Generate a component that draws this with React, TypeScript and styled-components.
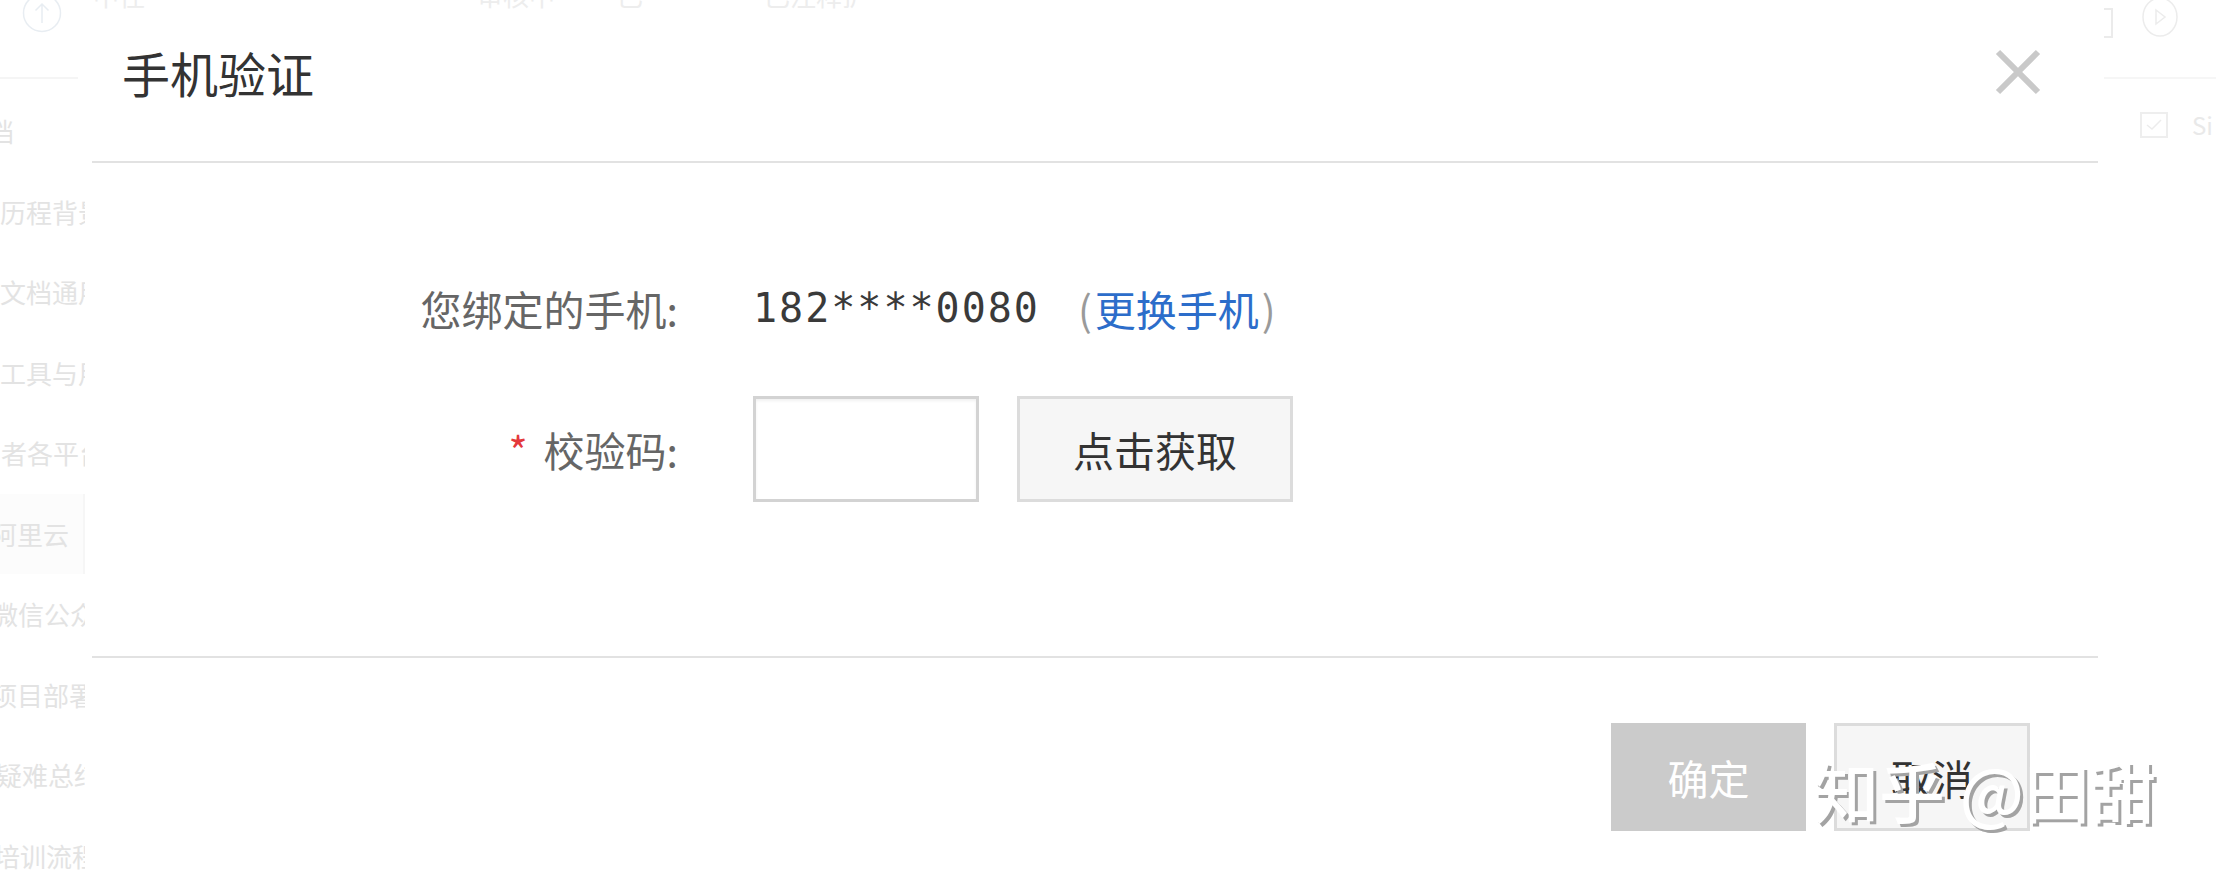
import React from "react";
import styled, { createGlobalStyle } from "styled-components";

const GlobalStyle = createGlobalStyle`
  html, body { margin: 0; padding: 0; background: #fff; }
  body {
    font-family: "Noto Sans CJK SC", "Noto Sans", sans-serif;
    overflow: hidden;
  }
  #root { width: 2216px; height: 882px; overflow: hidden; }
  * { box-sizing: border-box; }
`;

const Page = styled.div`
  position: relative;
  width: 2216px;
  height: 882px;
  overflow: hidden;
  background: #fff;
`;

/* ---------- faded page behind the modal ---------- */
const Backdrop = styled.div`
  display: flex;
  width: 100%;
  height: 100%;
  color: #e4e4e4;
`;

const Sidebar = styled.aside`
  width: 85px;
  flex: none;
  overflow: hidden;
  display: flex;
  flex-direction: column;
`;

const SideTop = styled.div`
  flex: none;
  width: 78px;
  height: 79px;
  border-bottom: 2px solid #f5f5f5;
  padding-left: 22px;
`;

const CircleIcon = styled.svg`
  display: block;
  margin-top: -7px;
`;

const SideList = styled.ul`
  flex: none;
  list-style: none;
  margin: 12px 0 0;
  padding: 0;
`;

const SideItem = styled.li<{ $shift: number; $active?: boolean }>`
  height: 80.5px;
  line-height: 80.5px;
  font-size: 26px;
  white-space: nowrap;
  text-indent: ${(p) => p.$shift}px;
  color: #e3e3e3;
  background: ${(p) => (p.$active ? "#fcfcfc" : "transparent")};
  border-right: 2px solid ${(p) => (p.$active ? "#f6f6f6" : "transparent")};
`;

const MainArea = styled.div`
  flex: 1;
  display: flex;
  flex-direction: column;
`;

const TopRow = styled.div`
  flex: none;
  display: flex;
  height: 10px;
  overflow: hidden;
`;

const TopCell = styled.div<{ $w: number }>`
  width: ${(p) => p.$w}px;
  flex: none;
  font-size: 26px;
  line-height: 28px;
  margin-top: -19px;
  padding-left: 8px;
  color: #ededed;
  white-space: nowrap;
`;

const RightPanel = styled.div`
  width: 116px;
  flex: none;
  display: flex;
  flex-direction: column;
  overflow: hidden;
`;

const RightTop = styled.div`
  flex: none;
  margin-left: 4px;
  height: 79px;
  border-bottom: 2px solid #f6f6f6;
  display: flex;
  align-items: flex-start;
  gap: 28px;
`;

const Bracket = styled.div`
  width: 9px;
  height: 30px;
  margin-top: 8px;
  border: 2px solid #ebebeb;
  border-left: none;
`;

const PlayIcon = styled.svg`
  display: block;
  margin-top: -4px;
`;

const RightRow = styled.div`
  flex: none;
  display: flex;
  align-items: center;
  gap: 24px;
  padding: 28px 0 0 40px;
  font-size: 24px;
  color: #e9e9e9;
`;

const CheckBox = styled.div`
  width: 28px;
  height: 26px;
  border: 2px solid #eeeeee;
  display: flex;
  align-items: center;
  justify-content: center;
`;

/* ---------- modal ---------- */
const Modal = styled.section`
  position: absolute;
  left: 92px;
  top: 16px;
  width: 2006px;
  height: 900px;
  background: #fff;
  display: flex;
  flex-direction: column;
`;

const Header = styled.header`
  height: 147px;
  flex: none;
  display: flex;
  justify-content: space-between;
  align-items: flex-start;
  padding: 24px 57px 0 30px;
  border-bottom: 2px solid #e2e2e2;
`;

const Title = styled.h2`
  margin: 0;
  font-size: 48px;
  line-height: 64px;
  font-weight: 400;
  color: #333;
`;

const CloseButton = styled.button`
  margin-top: 9px;
  padding: 0;
  border: none;
  background: none;
  width: 46px;
  height: 46px;
  cursor: pointer;
`;

const Body = styled.div`
  height: 495px;
  flex: none;
  padding-top: 115px;
  border-bottom: 2px solid #e2e2e2;
`;

const Form = styled.div`
  display: grid;
  grid-template-columns: 586px 1fr;
  column-gap: 75px;
  row-gap: 58px;
  align-items: center;
`;

const Label = styled.div`
  text-align: right;
  font-size: 41px;
  line-height: 60px;
  color: #666;
  white-space: nowrap;
`;

const Required = styled.span`
  color: #e4393c;
  margin-right: 16px;
`;

const Field = styled.div`
  display: flex;
  align-items: center;
  font-size: 41px;
  line-height: 60px;
`;

const Phone = styled.span`
  font-family: "DejaVu Sans Mono", "Liberation Mono", monospace;
  font-size: 40px;
  letter-spacing: 2px;
  color: #3a3a3a;
`;

const Paren = styled.span`
  color: #9a9a9a;
  margin: 0 3px;
`;

const ChangeLink = styled.a`
  color: #2c6dca;
  text-decoration: none;
`;

const LinkGroup = styled.span`
  margin-left: 35px;
`;

const CodeInput = styled.input`
  width: 226px;
  height: 106px;
  border: 3px solid #d3d3d3;
  box-shadow: inset 0 2px 3px rgba(0, 0, 0, 0.06);
  outline: none;
  font-size: 40px;
  padding: 0 12px;
  background: #fff;
`;

const GrayButton = styled.button<{ $w: number; $h: number }>`
  width: ${(p) => p.$w}px;
  height: ${(p) => p.$h}px;
  background: #f6f6f6;
  border: 3px solid #dcdcdc;
  font-family: "Noto Sans CJK SC", sans-serif;
  font-size: 41px;
  color: #333;
  padding: 0;
  cursor: pointer;
`;

const FetchButton = styled(GrayButton)`
  margin-left: 38px;
`;

const Footer = styled.footer`
  display: flex;
  justify-content: flex-end;
  gap: 28px;
  padding: 65px 68px 0 0;
`;

const PrimaryButton = styled.button`
  width: 195px;
  height: 108px;
  background: #cbcbcb;
  border: none;
  color: #fff;
  font-family: "Noto Sans CJK SC", sans-serif;
  font-size: 41px;
  padding: 0;
`;

const Watermark = styled.div`
  position: absolute;
  left: 1813px;
  top: 744px;
  font-size: 66px;
  line-height: 90px;
  font-weight: 500;
  color: #fff;
  text-shadow: 3px 3px 0 #a3a3a3;
  white-space: nowrap;
  pointer-events: none;
`;

const sideItems: { text: string; shift: number; active?: boolean }[] = [
  { text: "档", shift: -12 },
  { text: "历程背景", shift: 0 },
  { text: "文档通用", shift: 0 },
  { text: "工具与用", shift: 0 },
  { text: "者各平台", shift: 1 },
  { text: "阿里云", shift: -9, active: true },
  { text: "微信公众", shift: -8 },
  { text: "项目部署", shift: -9 },
  { text: "疑难总结", shift: -4 },
  { text: "培训流程", shift: -6 },
];

const topCells = [
  { w: 384, text: "中径" },
  { w: 140, text: "审核中" },
  { w: 147, text: "已" },
  { w: 400, text: "已注释护" },
];

export default function App() {
  return (
    <Page>
      <GlobalStyle />
      <Backdrop>
        <Sidebar>
          <SideTop>
            <CircleIcon width="40" height="40" viewBox="0 0 40 40">
              <circle cx="20" cy="20" r="18.5" fill="none" stroke="#e8edf2" strokeWidth="1.5" />
              <path d="M20 30 V11 M13.5 17.5 L20 11 L26.5 17.5" fill="none" stroke="#e8edf2" strokeWidth="1.5" />
            </CircleIcon>
          </SideTop>
          <SideList>
            {sideItems.map((it) => (
              <SideItem key={it.text} $shift={it.shift} $active={it.active}>
                {it.text}
              </SideItem>
            ))}
          </SideList>
        </Sidebar>
        <MainArea>
          <TopRow>
            {topCells.map((c) => (
              <TopCell key={c.text} $w={c.w}>
                {c.text}
              </TopCell>
            ))}
          </TopRow>
        </MainArea>
        <RightPanel>
          <RightTop>
            <Bracket />
            <PlayIcon width="38" height="42" viewBox="0 0 38 42">
              <ellipse cx="19" cy="21" rx="17" ry="19" fill="none" stroke="#ececec" strokeWidth="1.5" />
              <path d="M15 14 L24 21 L15 28 Z" fill="none" stroke="#ececec" strokeWidth="1.5" />
            </PlayIcon>
          </RightTop>
          <RightRow>
            <CheckBox>
              <svg width="16" height="12" viewBox="0 0 16 12">
                <path d="M1 6 L6 10 L15 1" fill="none" stroke="#ececec" strokeWidth="1.5" />
              </svg>
            </CheckBox>
            <span>Si</span>
          </RightRow>
        </RightPanel>
      </Backdrop>

      <Modal>
        <Header>
          <Title>手机验证</Title>
          <CloseButton aria-label="关闭">
            <svg width="46" height="46" viewBox="0 0 46 46">
              <path d="M3 3 L43 43 M43 3 L3 43" stroke="#c9c9c9" strokeWidth="6" fill="none" />
            </svg>
          </CloseButton>
        </Header>
        <Body>
          <Form>
            <Label>您绑定的手机:</Label>
            <Field>
              <Phone>182****0080</Phone>
              <LinkGroup>
                <Paren>(</Paren>
                <ChangeLink href="#">更换手机</ChangeLink>
                <Paren>)</Paren>
              </LinkGroup>
            </Field>
            <Label>
              <Required>*</Required>校验码:
            </Label>
            <Field>
              <CodeInput type="text" />
              <FetchButton $w={276} $h={106}>点击获取</FetchButton>
            </Field>
          </Form>
        </Body>
        <Footer>
          <PrimaryButton>确定</PrimaryButton>
          <GrayButton $w={196} $h={108}>取消</GrayButton>
        </Footer>
      </Modal>

      <Watermark>知乎 @田甜</Watermark>
    </Page>
  );
}
